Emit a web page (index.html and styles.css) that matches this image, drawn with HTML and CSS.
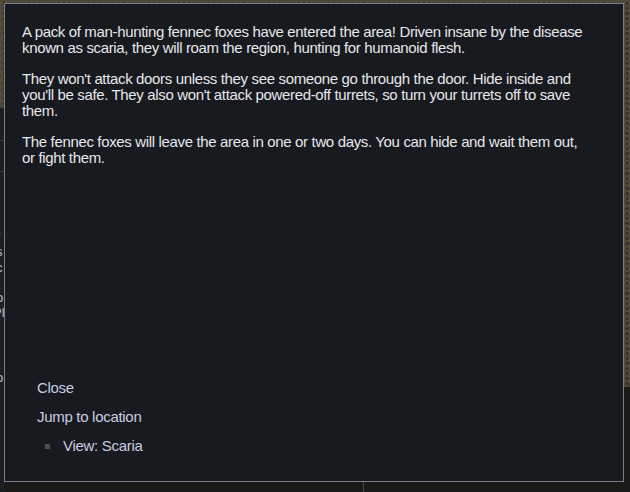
FILE: index.html
```html
<!DOCTYPE html>
<html>
<head>
<meta charset="utf-8">
<link rel="stylesheet" href="styles.css">
</head>
<body>
<div class="backdrop">
  <div class="map map-top"></div>
  <div class="map map-left"></div>
  <div class="map map-right"></div>
  <div class="panel-left">
    <span class="frag f1">r</span>
    <span class="frag f2">s</span>
    <span class="frag f3">c</span>
    <span class="frag f4">o</span>
    <span class="frag f5">Pl</span>
    <span class="frag f6">I</span>
    <span class="frag f7">o</span>
  </div>
  <div class="bottom-line"></div>
</div>
<div class="dialog">
  <div class="body-text">
    <p>A pack of man-hunting fennec foxes have entered the area! Driven insane by the disease known as scaria, they will roam the region, hunting for humanoid flesh.</p>
    <p>They won't attack doors unless they see someone go through the door. Hide inside and you'll be safe. They also won't attack powered-off turrets, so turn your turrets off to save them.</p>
    <p>The fennec foxes will leave the area in one or two days. You can hide and wait them out, or fight them.</p>
  </div>
  <ul class="options">
    <li class="opt">Close</li>
    <li class="opt">Jump to location</li>
    <li class="opt sub"><span class="bullet"></span>View: Scaria</li>
  </ul>
</div>
</body>
</html>
```

FILE: styles.css
```css
html, body {
  margin: 0;
  padding: 0;
}
body {
  width: 630px;
  height: 492px;
  overflow: hidden;
  position: relative;
  background: #1b1a18;
  font-family: "Liberation Sans", Arial, sans-serif;
  box-sizing: border-box;
  padding: 3px 6px 10px 4px;
}
.backdrop {
  position: absolute;
  inset: 0;
  z-index: 0;
}
.map {
  position: absolute;
  background-color: #4d463b;
  background-image:
    radial-gradient(circle at 30% 40%, rgba(90,80,60,0.8) 0 1px, transparent 2px),
    radial-gradient(circle at 70% 70%, rgba(40,36,30,0.7) 0 1px, transparent 2px);
  background-size: 5px 7px, 6px 5px;
}
.map-top { left: 0; top: 0; width: 630px; height: 4px; }
.map-left { left: 0; top: 0; width: 5px; height: 107px; }
.map-right { right: 0; top: 0; width: 7px; height: 387px; }
.panel-left {
  position: absolute;
  left: 0;
  top: 107px;
  width: 5px;
  height: 385px;
  background: #1b1e22;
  border-top: 1px solid #3a3d42;
  overflow: hidden;
}
.panel-left::before {
  content: "";
  position: absolute;
  left: 0; top: 32px; width: 5px; height: 30px;
  border-top: 1px solid #3a3d42;
  border-bottom: 1px solid #3a3d42;
}
.frag {
  position: absolute;
  left: -4px;
  color: #b8bcc4;
  font-size: 13px;
  line-height: 8px;
}
.f1 { top: 124px; }
.f2 { top: 140px; }
.f3 { top: 156px; }
.f4 { top: 186px; }
.f5 { top: 201px; left: -7px; }
.f6 { top: 252px; }
.f7 { top: 266px; }
.bottom-line {
  position: absolute;
  left: 363px;
  top: 482px;
  width: 1px;
  height: 10px;
  background: #45484d;
}
.dialog {
  position: relative;
  z-index: 1;
  width: 620px;
  height: 479px;
  box-sizing: border-box;
  background: #171a1f;
  border: 1px solid #7a7f87;
  display: flex;
  flex-direction: column;
  justify-content: space-between;
  padding: 20px 33px 26px 17px;
}
.body-text {
  color: #e6e7ea;
  font-size: 15px;
  letter-spacing: -0.35px;
  line-height: 15.7px;
}
.body-text p {
  margin: 0 0 15.7px 0;
}
.options {
  list-style: none;
  margin: 0;
  padding: 0 0 0 15px;
  display: flex;
  flex-direction: column;
  gap: 11px;
}
.opt {
  color: #c9cde0;
  font-size: 15px;
  letter-spacing: -0.3px;
  line-height: 18px;
  display: flex;
  align-items: center;
}
.sub {
  padding-left: 8px;
}
.bullet {
  width: 5px;
  height: 5px;
  background: #4c4f56;
  margin-right: 13px;
}
```
